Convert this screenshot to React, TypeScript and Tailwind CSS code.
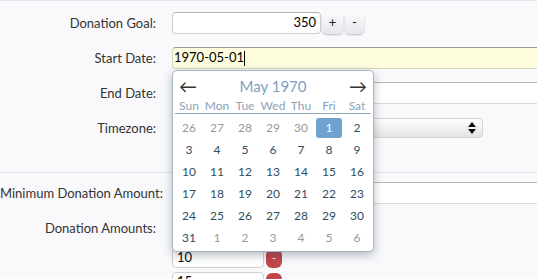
import React from "react";

const font = { fontFamily: "Lato, 'Liberation Sans', sans-serif" };

function Label({ children }: { children: React.ReactNode }) {
  return (
    <div className="w-[156px] shrink-0 text-right text-[13px] text-[#333] whitespace-nowrap leading-none">
      {children}
    </div>
  );
}

type Day = { d: number; cur: boolean; sel?: boolean };

function Calendar() {
  const days: Day[] = [];
  [26, 27, 28, 29, 30].forEach((d) => days.push({ d, cur: false }));
  for (let i = 1; i <= 31; i++) days.push({ d: i, cur: true, sel: i === 1 });
  [1, 2, 3, 4, 5, 6].forEach((d) => days.push({ d, cur: false }));
  const names = ["Sun", "Mon", "Tue", "Wed", "Thu", "Fri", "Sat"];
  return (
    <div className="absolute left-[172px] top-[69px] w-[202px] h-[182px] bg-white border border-[#a9b7c4] rounded-[5px] shadow-[0_3px_10px_rgba(40,60,80,0.35)] pt-[3px] px-[1px]">
      <div className="flex items-center justify-between h-[24px] px-[5px]">
        <span className="text-[18px] text-[#333] leading-none">←</span>
        <span className="text-[15px] text-[#7ba0c2] leading-none">May 1970</span>
        <span className="text-[18px] text-[#333] leading-none">→</span>
      </div>
      <div className="mx-[1px] grid grid-cols-7 h-[16px] border-b border-[#8ea8bd] items-center">
        {names.map((n) => (
          <div key={n} className="text-center text-[12px] text-[#8aa3b8] leading-none">
            {n}
          </div>
        ))}
      </div>
      <div className="mx-[1px] mt-[3px] grid grid-cols-7">
        {days.map((x, i) => (
          <div key={i} className="h-[22px] flex items-center justify-center">
            <div
              className={
                x.sel
                  ? "w-[26px] h-[20px] rounded-[3px] bg-[#6fa2cf] text-white flex items-center justify-center text-[12px]"
                  : x.cur
                  ? "w-[26px] h-[20px] flex items-center justify-center text-[12px] text-[#2f4d62]"
                  : "w-[26px] h-[20px] flex items-center justify-center text-[12px] text-[#9a9a9a]"
              }
            >
              {x.d}
            </div>
          </div>
        ))}
      </div>
    </div>
  );
}

export default function App() {
  return (
    <div
      className="relative w-[537px] h-[279px] overflow-hidden bg-[#f9f9fc] border-t border-[#e2e5ea]"
      style={font}
    >
      <div className="pt-[11px] flex flex-col">
        {/* Donation Goal */}
        <div className="flex items-center h-[22px]">
          <Label>Donation Goal:</Label>
          <div className="ml-[16px] w-[149px] h-[22px] bg-white border border-[#cfcfcf] border-t-[#b5b5b5] rounded-[4px] flex items-center justify-end pr-[4px] text-[13px] text-black">
            350
          </div>
          <div className="ml-[1px] w-[21px] h-[22px] rounded-[5px] bg-gradient-to-b from-[#fbfbfd] to-[#e6e6ec] shadow-[0_1px_2px_rgba(0,0,0,0.25)] flex items-center justify-center text-[13px] text-[#222]">
            +
          </div>
          <div className="ml-[2px] w-[19px] h-[22px] rounded-[5px] bg-gradient-to-b from-[#fbfbfd] to-[#e6e6ec] shadow-[0_1px_2px_rgba(0,0,0,0.25)] flex items-center justify-center text-[13px] text-[#222]">
            -
          </div>
        </div>

        {/* Start Date */}
        <div className="mt-[13px] flex items-center h-[22px]">
          <Label>Start Date:</Label>
          <div className="ml-[16px] w-[420px] shrink-0 h-[22px] bg-[#fefede] border border-[#d8d8c0] border-t-[#9a9a90] rounded-[4px] flex items-center pl-[1px] text-[13px] text-black">
            1970-05-01<span className="w-px h-[15px] bg-black" />
          </div>
        </div>

        {/* End Date */}
        <div className="mt-[13px] flex items-center h-[22px]">
          <Label>End Date:</Label>
          <div className="ml-[16px] w-[420px] shrink-0 h-[22px] bg-white border border-[#dadada] border-t-[#b8b8b8] rounded-[4px]" />
        </div>

        {/* Timezone */}
        <div className="mt-[13px] flex items-center h-[22px]">
          <Label>Timezone:</Label>
          <div className="ml-[16px] w-[311px] h-[20px] rounded-[4px] border border-[#d4d4d4] bg-gradient-to-b from-[#ffffff] to-[#e4e4e4] flex items-center justify-end pr-[6px]">
            <svg width="8" height="12" viewBox="0 0 8 12">
              <path d="M4 0 L8 5 L0 5 Z" fill="#111" />
              <path d="M0 7 L8 7 L4 12 Z" fill="#111" />
            </svg>
          </div>
        </div>

        <div className="mt-[33px] h-px bg-[#dfe3e8]" />

        {/* Minimum Donation Amount */}
        <div className="mt-[9px] flex items-center h-[22px]">
          <Label>Minimum Donation Amount:</Label>
          <div className="ml-[16px] w-[420px] shrink-0 h-[22px] bg-white border border-[#dadada] border-t-[#b8b8b8] rounded-[4px]" />
        </div>

        {/* Donation Amounts */}
        <div className="mt-[13px] flex items-center h-[22px]">
          <Label>Donation Amounts:</Label>
        </div>
        <div className="mt-[9px] flex flex-col gap-[4px] pl-[172px]">
          {["10", "15"].map((v) => (
            <div key={v} className="flex items-center">
              <div className="w-[92px] h-[20px] bg-white border border-[#cfcfcf] rounded-[4px] flex items-center pl-[4px] text-[13px] text-black">
                {v}
              </div>
              <div className="ml-[2px] w-[16px] h-[19px] rounded-[6px] bg-[#c1464a] flex items-center justify-center text-[11px] text-white">
                -
              </div>
            </div>
          ))}
        </div>
      </div>
      <Calendar />
    </div>
  );
}
